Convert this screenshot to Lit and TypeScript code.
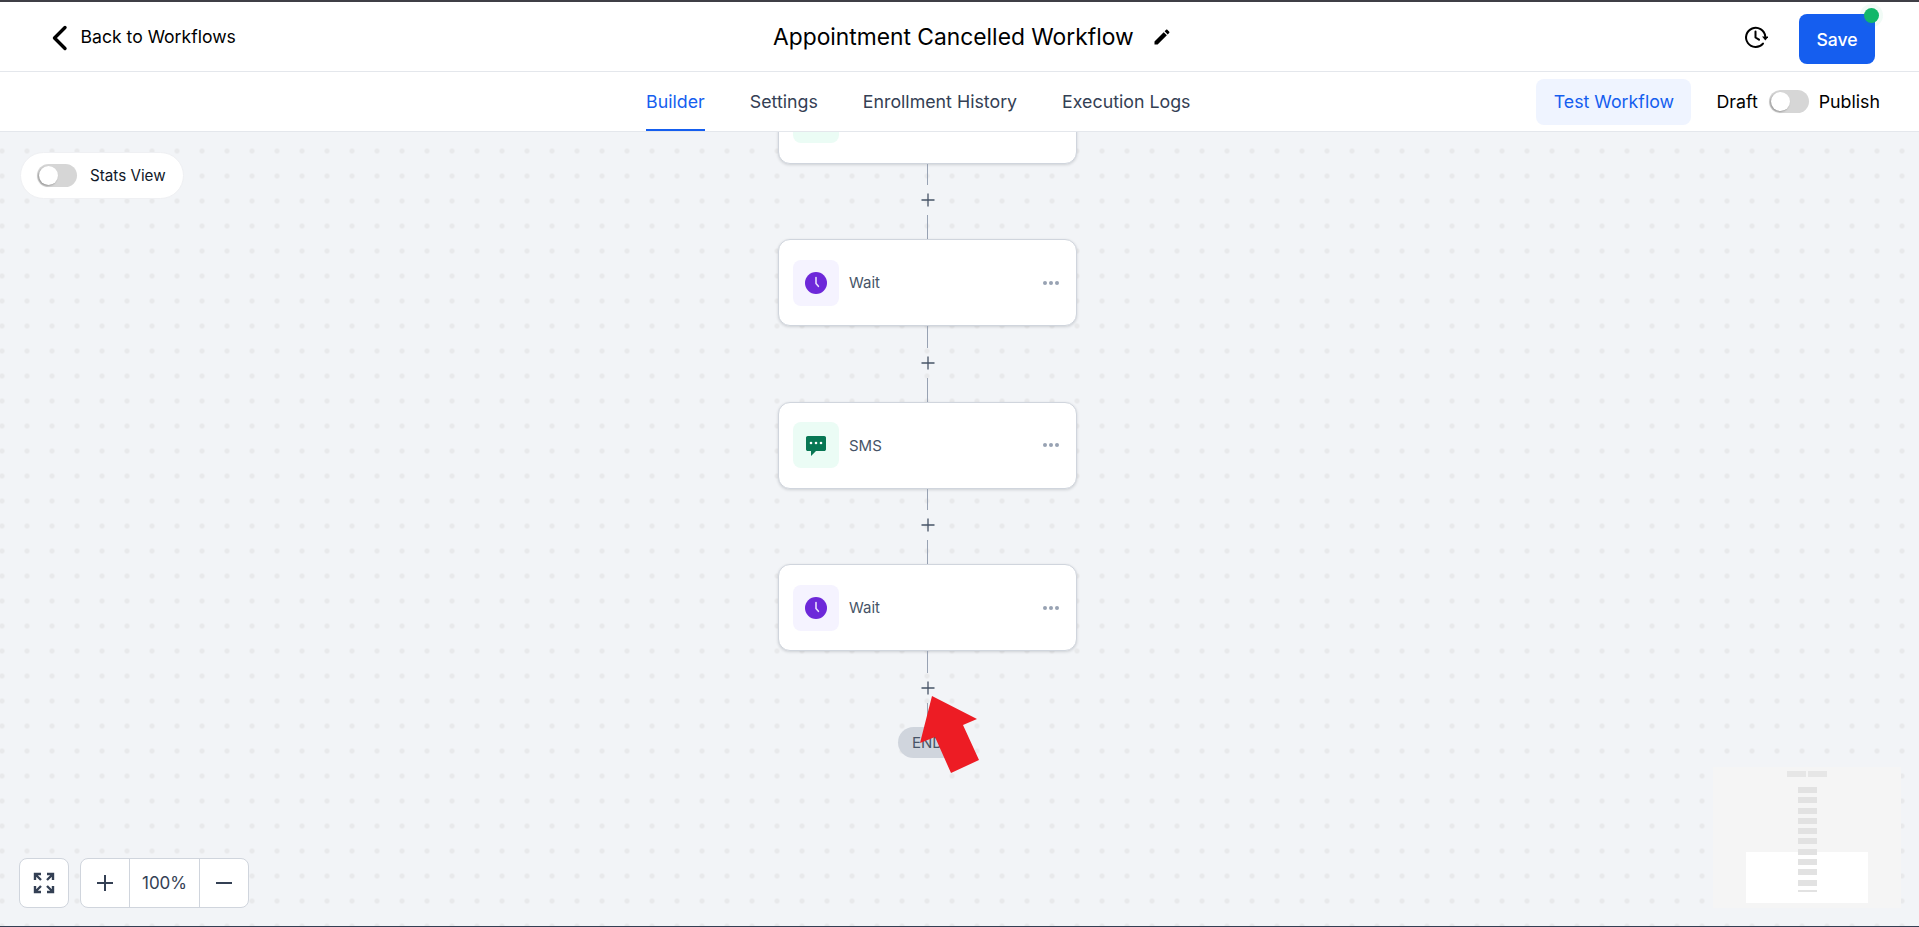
import { LitElement, css, html, svg } from "lit";
import { customElement, property } from "lit/decorators.js";

const clockIcon = svg`<circle cx="12" cy="12" r="11" fill="#6d28d9"/><path d="M12 6.500v6l2.400 2.800" fill="none" stroke="#e9defc" stroke-width="1.600" stroke-linecap="round" stroke-linejoin="round"/>`;
const smsIcon = svg`<path d="M3.800 3h16.400c1 0 1.800.8 1.800 1.800v11.400c0 1-.8 1.800-1.800 1.800H12l-5 5v-5H3.800C2.800 18 2 17.200 2 16.200V4.800C2 3.800 2.800 3 3.800 3z" fill="#087754"/><circle cx="7" cy="10" r="1.300" fill="#fff"/><circle cx="12" cy="10" r="1.300" fill="#fff"/><circle cx="17" cy="10" r="1.300" fill="#fff"/>`;

@customElement("wf-node")
export class WfNode extends LitElement {
  @property({ type: String }) label = "";
  @property({ type: String }) kind = "wait";

  static styles = css`
    :host {
      display: block;
    }
    .card {
      box-sizing: border-box;
      width: 299px;
      height: 87px;
      background: #fff;
      border: 1px solid #d0d5dd;
      border-radius: 12px;
      box-shadow: 0 1px 3px rgba(16, 24, 40, 0.16);
      display: flex;
      align-items: center;
      padding: 0 17px 0 14px;
    }
    .icon {
      width: 46px;
      height: 46px;
      border-radius: 8px;
      display: flex;
      align-items: center;
      justify-content: center;
      flex: none;
    }
    .wait {
      background: #f5f3ff;
    }
    .sms {
      background: #ebfcf5;
    }
    .label {
      margin-left: 10px;
      font-size: 15px;
      color: #475467;
      flex: 1;
    }
    .more {
      display: flex;
      gap: 2px;
    }
    .more i {
      width: 4px;
      height: 4px;
      border-radius: 50%;
      background: #98a2b3;
    }
  `;

  render() {
    const isWait = this.kind === "wait";
    return html`<div class="card">
      <div class="icon ${this.kind}">
        <svg width="24" height="24" viewBox="0 0 24 24">${isWait ? clockIcon : smsIcon}</svg>
      </div>
      <div class="label">${this.label}</div>
      <div class="more"><i></i><i></i><i></i></div>
    </div>`;
  }
}

@customElement("app-root")
export class AppRoot extends LitElement {
  static styles = css`
    :host {
      display: flex;
      flex-direction: column;
      height: 100vh;
      overflow: hidden;
      font-family: Inter, "Liberation Sans", sans-serif;
      border-top: 2px solid #3f3f46;
      border-bottom: 1px solid #344054;
      box-sizing: border-box;
      color: #000;
    }
    .head {
      height: 69px;
      flex: none;
      display: flex;
      align-items: center;
      background: #fff;
      border-bottom: 1px solid #e4e7ec;
    }
    .back {
      display: flex;
      align-items: center;
      margin-left: 50px;
      width: 723px;
      font-size: 17.6px;
      gap: 12.5px;
    }
    .back svg {
      margin-top: 2px;
    }
    .title {
      display: flex;
      align-items: center;
      font-size: 22.8px;
      gap: 18px;
    }
    .head-right {
      margin-left: auto;
      margin-right: 44px;
      display: flex;
      align-items: center;
      gap: 31px;
    }
    .save {
      position: relative;
      width: 76px;
      height: 50px;
      margin-top: 5px;
      border-radius: 8px;
      background: #155eef;
      color: #fff;
      font-size: 17.6px;
      font-weight: 500;
      display: flex;
      align-items: center;
      justify-content: center;
    }
    .save::after {
      content: "";
      position: absolute;
      top: -6px;
      right: -4px;
      width: 15px;
      height: 15px;
      border-radius: 50%;
      background: #12b76a;
      box-shadow: 0 0 0 4px rgba(18, 183, 106, 0.06);
    }
    .tabs-bar {
      height: 59px;
      flex: none;
      display: flex;
      background: #fff;
      border-bottom: 1px solid #e4e7ec;
    }
    .tabs {
      display: flex;
      gap: 45px;
      margin-left: 646px;
    }
    .tab {
      height: 59px;
      display: flex;
      align-items: center;
      font-size: 17.8px;
      color: #344054;
      box-sizing: border-box;
    }
    .tab.on {
      color: #155eef;
      box-shadow: inset 0 -2px 0 #155eef;
    }
    .tools {
      margin-left: auto;
      margin-right: 39px;
      display: flex;
      align-items: center;
      font-size: 17.8px;
    }
    .test {
      width: 155px;
      height: 46px;
      border-radius: 8px;
      background: #eff4ff;
      color: #155eef;
      display: flex;
      align-items: center;
      justify-content: center;
      margin-right: 25px;
    }
    .switch {
      position: relative;
      width: 40px;
      height: 23px;
      border-radius: 12px;
      background: #d6d6d6;
      flex: none;
    }
    .switch::after {
      content: "";
      position: absolute;
      left: 2px;
      top: 2px;
      width: 19px;
      height: 19px;
      border-radius: 50%;
      background: #fff;
      box-shadow: -1px 1px 2px rgba(0, 0, 0, 0.3);
    }
    .tools .switch {
      margin: 0 10px 0 11px;
    }
    .canvas {
      position: relative;
      flex: 1;
      overflow: hidden;
      background-color: #f2f4f7;
      background-image: radial-gradient(circle, #e8e9eb 2.2px, transparent 2.8px);
      background-size: 25px 25px;
      background-position: -10.5px 6.5px;
    }
    .flow {
      position: absolute;
      left: 778px;
      top: -55.25px;
      width: 299px;
      display: flex;
      flex-direction: column;
      align-items: center;
    }
    .link {
      width: 100%;
      height: 75.5px;
      display: flex;
      flex-direction: column;
      align-items: center;
    }
    .wire {
      width: 1px;
      background: #98a2b3;
      flex: 1;
    }
    .wire.top {
      flex: none;
      height: 21.5px;
    }
    .plus {
      flex: none;
      margin: 7px 0;
      height: 16px;
      display: block;
    }
    .end {
      width: 60px;
      height: 31px;
      border-radius: 16px;
      background: #d0d5dd;
      color: #475467;
      font-size: 15px;
      display: flex;
      align-items: center;
      justify-content: center;
    }
    .stats {
      position: absolute;
      left: 20px;
      top: 20px;
      width: 164px;
      height: 47px;
      box-sizing: border-box;
      padding-left: 16px;
      border-radius: 24px;
      background: #fff;
      border: 1px solid #eff0f3;
      display: flex;
      align-items: center;
      gap: 13px;
      font-size: 15.2px;
      color: #101828;
    }
    .zoom {
      position: absolute;
      left: 19px;
      bottom: 18px;
      display: flex;
      gap: 11px;
    }
    .zbox {
      height: 50px;
      box-sizing: border-box;
      background: #fff;
      border: 1px solid #d0d5dd;
      border-radius: 8px;
      display: flex;
      align-items: center;
      color: #344054;
      font-size: 17px;
    }
    .zcell {
      height: 100%;
      display: flex;
      align-items: center;
      justify-content: center;
      width: 48px;
    }
    .zcell.pct {
      box-sizing: border-box;
      width: 71px;
      border-left: 1px solid #d0d5dd;
      border-right: 1px solid #d0d5dd;
    }
    .minimap {
      position: absolute;
      left: 1713px;
      top: 635px;
      width: 188px;
      height: 141px;
      background: #f5f5f5;
      display: flex;
      flex-direction: column;
      align-items: center;
    }
    .mm-view {
      position: absolute;
      left: 33px;
      top: 85px;
      width: 122px;
      height: 51px;
      background: #fff;
    }
    .mm-top {
      position: relative;
      display: flex;
      gap: 2px;
      margin-top: 4px;
    }
    .mm-top i {
      width: 19px;
      height: 6px;
      background: #e6e6e6;
    }
    .mm-list {
      position: relative;
      display: flex;
      flex-direction: column;
      gap: 4.3px;
      margin-top: 10px;
    }
    .mm-list i {
      display: block;
      width: 19px;
      height: 6px;
      background: #e2e2e2;
    }
    .arrow {
      position: absolute;
      left: 920px;
      top: 564px;
    }
  `;

  renderLink() {
    return html`<div class="link">
      <div class="wire top"></div>
      <svg class="plus" width="16" height="16" viewBox="0 0 16 16">
        <path d="M8 1.500v13M1.500 8h13" stroke="#475467" stroke-width="1.300" fill="none" />
      </svg>
      <div class="wire"></div>
    </div>`;
  }

  render() {
    return html`
      <div class="head">
        <div class="back">
          <svg width="18" height="26" viewBox="0 0 18 26">
            <path d="M15 2.500 4.500 13 15 23.500" fill="none" stroke="#000" stroke-width="3.400" stroke-linecap="round" stroke-linejoin="round" />
          </svg>
          <span>Back to Workflows</span>
        </div>
        <div class="title">
          <span>Appointment Cancelled Workflow</span>
          <svg width="20" height="20" viewBox="0 0 24 24">
            <path d="M3 17.250V21h3.750L17.810 9.940l-3.750-3.750L3 17.250zM20.710 7.040c.39-.39.39-1.020 0-1.410l-2.340-2.340c-.39-.39-1.020-.39-1.410 0l-1.830 1.830 3.750 3.750 1.830-1.830z" />
          </svg>
        </div>
        <div class="head-right">
          <svg width="24" height="24" viewBox="0 0 24 24">
            <path d="M21.200 11.200A9.600 9.600 0 1 0 19 18.600" fill="none" stroke="#000" stroke-width="2" stroke-linecap="round" />
            <path d="M11.500 6.500v6l3.500 2.200" fill="none" stroke="#000" stroke-width="2" stroke-linecap="round" stroke-linejoin="round" />
            <path d="M18 11.500h6.600l-3.300 4z" />
          </svg>
          <div class="save">Save</div>
        </div>
      </div>
      <div class="tabs-bar">
        <div class="tabs">
          <div class="tab on">Builder</div>
          <div class="tab">Settings</div>
          <div class="tab">Enrollment History</div>
          <div class="tab">Execution Logs</div>
        </div>
        <div class="tools">
          <div class="test">Test Workflow</div>
          <span>Draft</span>
          <div class="switch"></div>
          <span>Publish</span>
        </div>
      </div>
      <div class="canvas">
        <div class="flow">
          <wf-node kind="sms" label=""></wf-node>
          ${this.renderLink()}
          <wf-node kind="wait" label="Wait"></wf-node>
          ${this.renderLink()}
          <wf-node kind="sms" label="SMS"></wf-node>
          ${this.renderLink()}
          <wf-node kind="wait" label="Wait"></wf-node>
          ${this.renderLink()}
          <div class="end">END</div>
        </div>
        <div class="stats">
          <div class="switch"></div>
          <span>Stats View</span>
        </div>
        <div class="zoom">
          <div class="zbox">
            <div class="zcell">
              <svg width="22" height="22" viewBox="0 0 22 22" fill="none" stroke="#344054" stroke-width="2.400">
                <path d="M2 8V2h6M2 2l6 6M14 2h6v6M20 2l-6 6M2 14v6h6M2 20l6-6M20 14v6h-6M20 20l-6-6" />
              </svg>
            </div>
          </div>
          <div class="zbox">
            <div class="zcell">
              <svg width="18" height="18" viewBox="0 0 18 18"><path d="M9 1v16M1 9h16" stroke="#344054" stroke-width="2" /></svg>
            </div>
            <div class="zcell pct">100%</div>
            <div class="zcell">
              <svg width="18" height="18" viewBox="0 0 18 18"><path d="M1 9h16" stroke="#344054" stroke-width="2" /></svg>
            </div>
          </div>
        </div>
        <div class="minimap">
          <div class="mm-view"></div>
          <div class="mm-top"><i></i><i></i></div>
          <div class="mm-list">
            ${Array.from({ length: 10 }, () => html`<i></i>`)}
            <i style="height:2px"></i>
          </div>
        </div>
        <svg class="arrow" width="62" height="80" viewBox="0 0 62 80">
          <path d="M12 0 57 23 43 29 59 64 31 77 15 41 0 47z" fill="#ed1c24" />
        </svg>
      </div>
    `;
  }
}
